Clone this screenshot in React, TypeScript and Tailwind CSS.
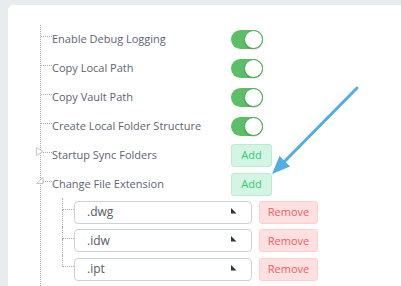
import React from "react";

const font = { fontFamily: '"Open Sans", "Noto Sans", sans-serif' };

function Toggle() {
  return (
    <div className="flex h-[19px] w-[32px] items-center justify-end rounded-full bg-[#5cbf68]">
      <div className="h-[19px] w-[19px] rounded-full border border-[#4aa957] bg-white shadow-[0_1px_1px_rgba(0,0,0,0.15)]" />
    </div>
  );
}

function AddButton() {
  return (
    <button className="flex h-[23px] w-[41px] items-center justify-center rounded-[3px] border border-[#b9ecd1] bg-[#d5f5e4] text-[11px] text-[#2fcb74]">
      Add
    </button>
  );
}

function Row({ label, children, caret }: { label: string; children: React.ReactNode; caret?: "right" | "down" }) {
  return (
    <div className="relative flex h-[29px] items-start">
      {caret && (
        <svg className="absolute left-[-5px] top-[6px] z-10" width="8" height="9" viewBox="0 0 8 9">
          {caret === "right" ? (
            <polygon points="0.5,0.5 7,4.5 0.5,8.5" fill="white" stroke="#c2c6ca" strokeWidth="1" />
          ) : (
            <polygon points="7,1.5 7,7.5 0.5,7.5" fill="white" stroke="#c2c6ca" strokeWidth="1" />
          )}
        </svg>
      )}
      <div className="h-[12px] w-[11px] shrink-0 border-b border-dotted border-[#a9aeb3]" />
      <div className="flex h-[29px] w-[179px] shrink-0 items-center pb-[1px] text-[11px] text-[#5d6472]">{label}</div>
      <div className="flex h-[29px] items-center">{children}</div>
    </div>
  );
}

function ExtRow({ ext, last }: { ext: string; last?: boolean }) {
  return (
    <div className="flex h-[28.5px] items-stretch">
      <div className="flex w-[12px] shrink-0 flex-col">
        <div className="h-[12px] border-b border-l border-dotted border-[#a9aeb3]" />
        <div className={last ? "flex-1" : "flex-1 border-l border-dotted border-[#a9aeb3]"} />
      </div>
      <div className="flex items-center">
        <div className="flex h-[23px] w-[178px] items-center justify-between rounded-[4px] border border-[#ccd1d8] bg-white pl-[12px] pr-[14px] text-[12px] text-[#555b63]">
          <span>{ext}</span>
          <svg width="6" height="6" viewBox="0 0 6 6" className="mb-[3px]">
            <polygon points="0,0 0,5.5 5.5,5.5" fill="#333" />
          </svg>
        </div>
        <button className="ml-[7px] flex h-[23px] w-[59px] items-center justify-center rounded-[3px] border border-[#ffcfcf] bg-[#ffe0e0] text-[11px] text-[#f25c66]">
          Remove
        </button>
      </div>
    </div>
  );
}

export default function App() {
  return (
    <div className="relative h-[286px] w-[401px] overflow-hidden bg-[#e9ecef] pl-[8px] pt-[5px]" style={font}>
      <div className="h-full rounded-tl-[5px] bg-white pl-[32px] pt-[20px]">
        <div className="h-full border-l border-dotted border-[#a9aeb3]">
          <Row label="Enable Debug Logging"><Toggle /></Row>
          <Row label="Copy Local Path"><Toggle /></Row>
          <Row label="Copy Vault Path"><Toggle /></Row>
          <Row label="Create Local Folder Structure"><Toggle /></Row>
          <Row label="Startup Sync Folders" caret="right"><AddButton /></Row>
          <Row label="Change File Extension" caret="down"><AddButton /></Row>
          <div className="ml-[21px] -mt-[1px]">
            <ExtRow ext=".dwg" />
            <ExtRow ext=".idw" />
            <ExtRow ext=".ipt" last />
          </div>
        </div>
      </div>

      {/* annotation arrow */}
      <svg className="pointer-events-none absolute inset-0" width="401" height="286" viewBox="0 0 401 286">
        <line x1="357" y1="88" x2="282" y2="164" stroke="#52ade3" strokeWidth="3" strokeLinecap="round" />
        <polygon points="272,174 279.5,156 290,166.5" fill="#52ade3" />
      </svg>
    </div>
  );
}
